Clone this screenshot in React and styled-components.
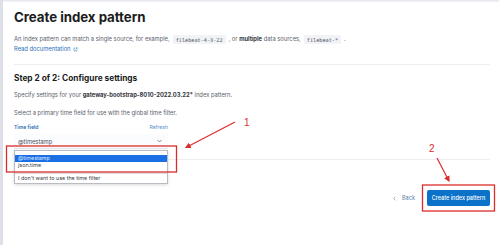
import React from "react";
import styled, { createGlobalStyle } from "styled-components";

const Global = createGlobalStyle`
  html, body { margin: 0; padding: 0; background: #fff; }
  body { font-family: Inter, "Noto Sans", sans-serif; -webkit-font-smoothing: antialiased; }
  * { box-sizing: border-box; }
`;

const Page = styled.div`
  position: relative;
  width: 499px;
  height: 245px;
  overflow: hidden;
  background: #fff;
  border-left: 3px solid #dde1e7;
`;

const TopShadow = styled.div`
  height: 3px;
  background: linear-gradient(#dfe3e9, #f7f8fa 60%, #fff);
`;

const Content = styled.div`
  padding: 6px 9px 0 11px;
`;

const Title = styled.h1`
  margin: 0;
  font-size: 13.3px;
  line-height: 16px;
  font-weight: 700;
  color: #1a1c21;
  letter-spacing: -0.05px;
`;

const Text = styled.p`
  margin: ${(p) => p.$mt || 0}px 0 0;
  font-size: 5.8px;
  line-height: ${(p) => p.$lh || 10}px;
  color: #5a606b;
`;

const Code = styled.code`
  font-family: "DejaVu Sans Mono", "Liberation Mono", monospace;
  font-size: 5.2px;
  background: #f1f3f7;
  color: #4a4f5c;
  padding: 1.5px 3px;
  margin: 0 3px;
  border-radius: 1px;
`;

const Strong = styled.b`
  font-weight: 700;
  color: #343741;
`;

const Link = styled.a`
  color: #1f6fb8;
  text-decoration: none;
`;

const Rule = styled.hr`
  margin: ${(p) => p.$mt}px 0 0;
  border: 0;
  border-top: 1px solid #eceef2;
`;

const StepTitle = styled.h2`
  margin: 8px 0 0;
  font-size: 8.3px;
  line-height: 10px;
  font-weight: 700;
  color: #1a1c21;
`;

const FieldWrap = styled.div`
  position: relative;
  width: 154px;
  margin-top: 5px;
`;

const LabelRow = styled.div`
  display: flex;
  justify-content: space-between;
  align-items: center;
  height: 8px;
  font-size: 5.1px;
`;

const Label = styled.span`
  color: #1f6fb8;
  font-weight: 600;
`;

const Refresh = styled.span`
  color: #5b8fcc;
`;

const SelectBox = styled.div`
  margin-top: 3px;
  height: 15px;
  background: #fbfcfd;
  border-bottom: 1px solid #e4e8ee;
  display: flex;
  align-items: center;
  justify-content: space-between;
  padding: 0 6px 0 4px;
  font-size: 5.8px;
  color: #4a4f5c;
`;

const Dropdown = styled.div`
  position: absolute;
  left: 0;
  top: calc(100% + 1px);
  width: 154px;
  background: #fff;
  border: 1px solid #b9bcc2;
  box-shadow: 0 1px 3px rgba(0, 0, 0, 0.15);
  padding-top: 4px;
  font-size: 5.4px;
  color: #3a3d44;
  z-index: 2;
`;

const Option = styled.div`
  height: 6.5px;
  line-height: 6.5px;
  padding-left: 3px;
  background: ${(p) => (p.$active ? "#1b6fe4" : "transparent")};
  color: ${(p) => (p.$active ? "#dbe8ff" : "#3a3d44")};
`;

const OptionSep = styled.div`
  margin: 5px 0 0;
  border-top: 1px solid #d8dadd;
`;

const OptionLast = styled.div`
  height: 9px;
  line-height: 9px;
  padding-left: 3px;
`;

const Footer = styled.div`
  display: flex;
  justify-content: flex-end;
  align-items: center;
  gap: 12px;
  margin-top: 30px;
`;

const Back = styled.span`
  display: flex;
  align-items: center;
  gap: 6px;
  font-size: 5.6px;
  color: #5a7fae;
`;

const Button = styled.button`
  width: 63px;
  height: 16px;
  border: 0;
  border-radius: 2px;
  background: #0b72c9;
  color: #fff;
  font-family: inherit;
  font-size: 5.5px;
  font-weight: 500;
  padding: 0;
`;

const Overlay = styled.svg`
  position: absolute;
  left: -3px;
  top: 0;
  width: 499px;
  height: 245px;
  pointer-events: none;
  z-index: 5;
`;

const Chevron = () => (
  <svg width="5" height="4" viewBox="0 0 5 4">
    <path d="M0.6 1 L2.5 3 L4.4 1" fill="none" stroke="#5a606b" strokeWidth="0.7" />
  </svg>
);

const BackChevron = () => (
  <svg width="3" height="5" viewBox="0 0 3 5">
    <path d="M2.4 0.6 L0.7 2.5 L2.4 4.4" fill="none" stroke="#5a7fae" strokeWidth="0.6" />
  </svg>
);

const ExtIcon = () => (
  <svg width="5" height="5" viewBox="0 0 5 5" style={{ marginLeft: 2, verticalAlign: "-0.5px" }}>
    <path d="M2 1 H1 V4 H4 V3 M2.8 0.8 H4.2 V2.2 M4.2 0.8 L2.4 2.6" fill="none" stroke="#1f6fb8" strokeWidth="0.5" />
  </svg>
);

export default function App() {
  return (
    <>
      <Global />
      <Page>
        <TopShadow />
        <Content>
          <Title>Create index pattern</Title>
          <Text $mt={9}>
            An index pattern can match a single source, for example,
            <Code>filebeat-4-3-22</Code>, or <Strong>multiple</Strong> data sources,
            <Code>filebeat-*</Code>.
            <br />
            <Link>
              Read documentation
              <ExtIcon />
            </Link>
          </Text>
          <Rule $mt={10} />
          <StepTitle>Step 2 of 2: Configure settings</StepTitle>
          <Text $mt={7}>
            Specify settings for your <Strong>gateway-bootstrap-8010-2022.03.22*</Strong> index pattern.
          </Text>
          <Text $mt={8}>Select a primary time field for use with the global time filter.</Text>
          <FieldWrap>
            <LabelRow>
              <Label>Time field</Label>
              <Refresh>Refresh</Refresh>
            </LabelRow>
            <SelectBox>
              <span>@timestamp</span>
              <Chevron />
            </SelectBox>
            <Dropdown>
              <Option $active>@timestamp</Option>
              <Option>json.time</Option>
              <OptionSep />
              <OptionLast>I don't want to use the time filter</OptionLast>
            </Dropdown>
          </FieldWrap>
          <Rule $mt={10} />
          <Footer>
            <Back>
              <BackChevron />
              Back
            </Back>
            <Button>Create index pattern</Button>
          </Footer>
        </Content>
        <Overlay viewBox="0 0 499 245">
          <defs>
            <marker id="ah" viewBox="0 0 10 10" refX="8" refY="5" markerWidth="5" markerHeight="5" orient="auto">
              <path d="M0 0 L10 5 L0 10 z" fill="#dc2b2b" />
            </marker>
          </defs>
          <rect x="6.5" y="146" width="170" height="26" fill="none" stroke="#dc2b2b" strokeWidth="1.3" />
          <rect x="422.5" y="185" width="72" height="26" fill="none" stroke="#dc2b2b" strokeWidth="1.3" />
          <line x1="235" y1="122" x2="186" y2="147.5" stroke="#dc2b2b" strokeWidth="1.2" markerEnd="url(#ah)" />
          <line x1="437" y1="158" x2="449" y2="181" stroke="#dc2b2b" strokeWidth="1.2" markerEnd="url(#ah)" />
          <text x="244" y="126" fill="#dc2b2b" fontSize="10" fontFamily="Liberation Sans, sans-serif">1</text>
          <text x="429" y="152" fill="#dc2b2b" fontSize="10" fontFamily="Liberation Sans, sans-serif">2</text>
        </Overlay>
      </Page>
    </>
  );
}
